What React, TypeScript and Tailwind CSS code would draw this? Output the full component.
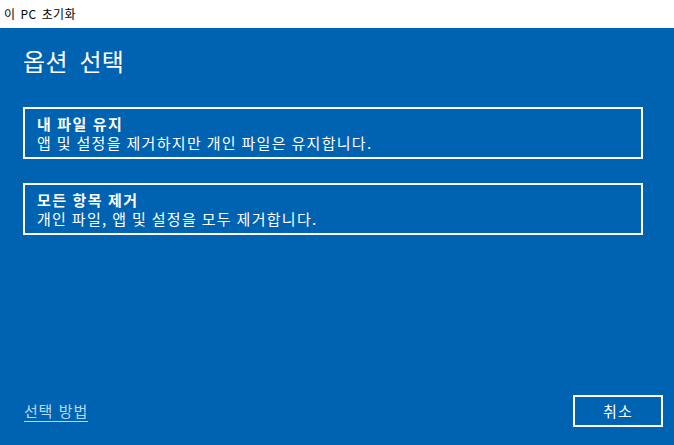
const font = { fontFamily: '"Noto Sans CJK KR", "Noto Sans", sans-serif' };

type OptionProps = { title: string; desc: string };

const OptionBox = ({ title, desc }: OptionProps) => (
  <button className="w-[620px] h-[52px] border-2 border-white text-left pl-[12px] flex flex-col justify-center text-white cursor-pointer hover:bg-[#1a73b9]">
    <span className="text-[15px] leading-[19px] font-bold tracking-[1.5px]">{title}</span>
    <span className="text-[15px] leading-[19px]">{desc}</span>
  </button>
);

export default function App() {
  return (
    <div
      className="w-[674px] h-[445px] flex flex-col overflow-hidden tracking-[1.3px] [word-spacing:1.5px]"
      style={font}
    >
      <div className="h-[28px] bg-white flex items-center pl-[4px] text-[12px] text-black tracking-[0.4px] [word-spacing:2px]">
        이 PC 초기화
      </div>
      <div className="flex-1 bg-[#0063b1] flex flex-col pl-[23px] pr-[11px] pb-[18px]">
        <h1 className="mt-[15px] text-[24px] leading-[36px] text-white font-normal tracking-[0.3px] [word-spacing:6px]">
          옵션 선택
        </h1>
        <div className="mt-[28px] flex flex-col gap-[24px]">
          <OptionBox title="내 파일 유지" desc="앱 및 설정을 제거하지만 개인 파일은 유지합니다." />
          <OptionBox title="모든 항목 제거" desc="개인 파일, 앱 및 설정을 모두 제거합니다." />
        </div>
        <div className="mt-auto flex items-center justify-between">
          <a href="#" className="ml-[1px] text-[15px] text-[#b8d8f2] underline underline-offset-4 tracking-[0.8px]">
            선택 방법
          </a>
          <button className="w-[90px] h-[32px] border-2 border-white text-white text-[15px]">
            취소
          </button>
        </div>
      </div>
    </div>
  );
}
